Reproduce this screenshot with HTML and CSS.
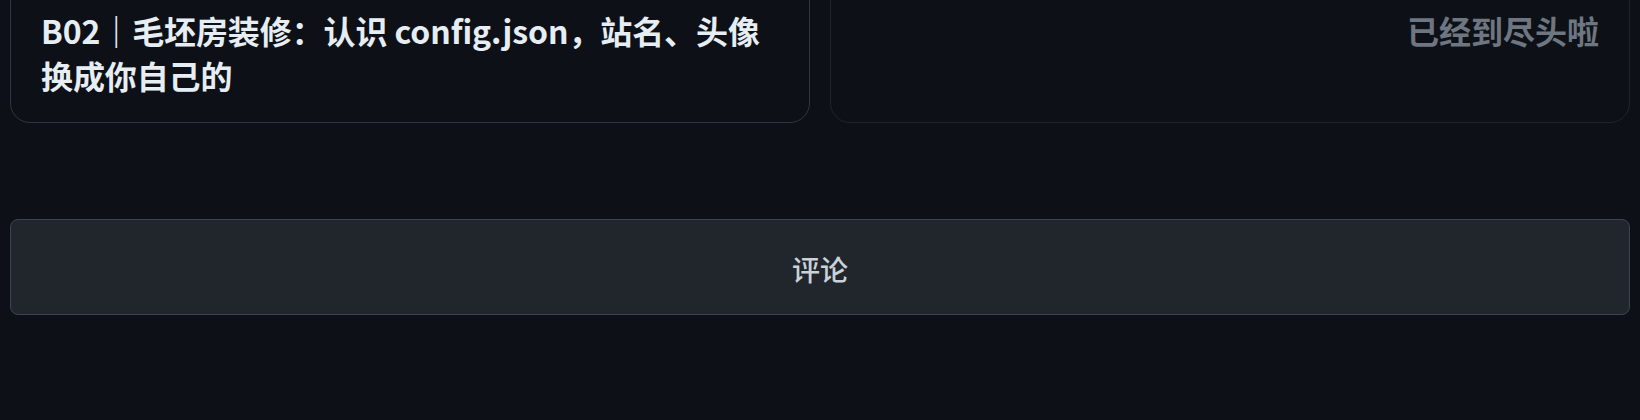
FILE: index.html
```html
<!DOCTYPE html>
<html lang="zh-CN">
<head>
<meta charset="utf-8">
<title>文章导航</title>
<link rel="stylesheet" href="styles.css">
</head>
<body>
<div class="page">
  <nav class="post-nav">
    <a class="nav-card nav-prev" href="#">
      <span class="nav-title">B02｜毛坯房装修：认识 config.json，站名、头像换成你自己的</span>
    </a>
    <div class="nav-card nav-next">
      <span class="nav-end">已经到尽头啦</span>
    </div>
  </nav>
  <button class="comment-btn" type="button">评论</button>
</div>
</body>
</html>
```

FILE: styles.css
```css
html, body {
  margin: 0;
  padding: 0;
  background: #0d1117;
}
body {
  font-family: "Noto Sans CJK SC", "Noto Sans", sans-serif;
  color: #e6edf3;
  height: 420px;
  overflow: hidden;
}
.page {
  padding: 0 10px;
}
.post-nav {
  display: grid;
  grid-template-columns: 1fr 1fr;
  gap: 20px;
  margin-top: -20px;
}
.nav-card {
  display: block;
  border: 1px solid #30363d;
  border-radius: 20px;
  padding: 27px 30px 24px;
  text-decoration: none;
  color: inherit;
}
.nav-next {
  border-color: #1f242b;
  text-align: right;
}
.nav-title {
  display: block;
  font-size: 32px;
  font-weight: 700;
  line-height: 45px;
  color: #e6edf3;
  padding-right: 10px;
  letter-spacing: -0.1px;
}
.nav-end {
  display: block;
  font-size: 32px;
  font-weight: 700;
  line-height: 45px;
  color: #6e7681;
}
.comment-btn {
  display: block;
  width: 100%;
  height: 96px;
  margin-top: 96px;
  padding-top: 4px;
  background: #21262d;
  border: 1px solid #3d444d;
  border-radius: 8px;
  color: #c9d1d9;
  font-family: "Noto Sans CJK SC", "Noto Sans", sans-serif;
  font-size: 28px;
  font-weight: 500;
  cursor: pointer;
}
```
